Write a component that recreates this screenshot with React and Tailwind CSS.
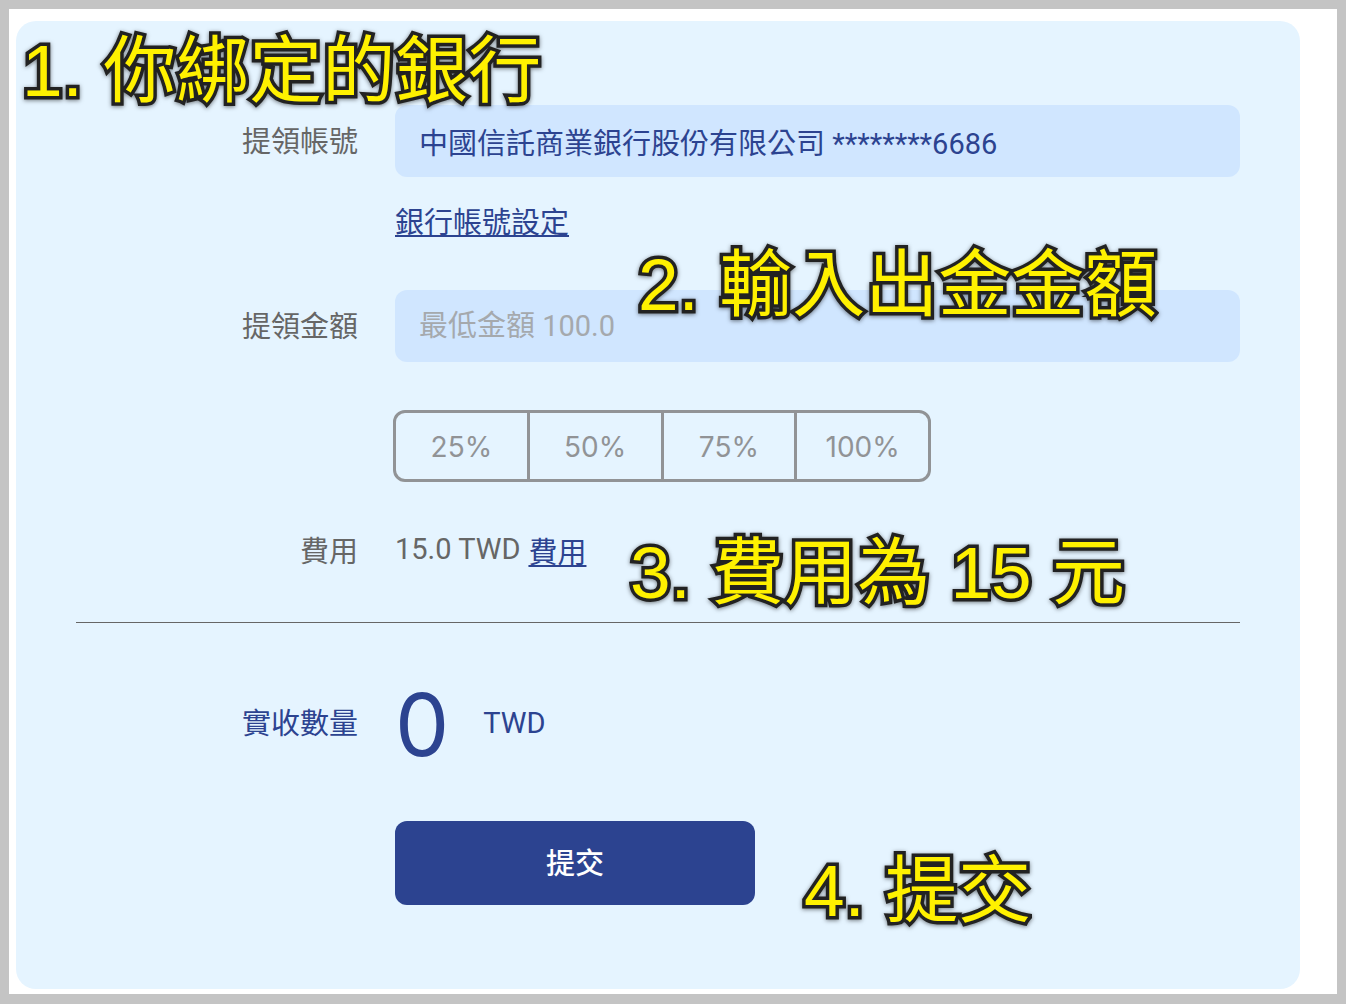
const percents = ["25%", "50%", "75%", "100%"];

function Note({ className, children }) {
  return (
    <div className={`pointer-events-none absolute whitespace-nowrap ${className}`}>
      <span className="font-['Liberation_Sans','Noto_Sans_CJK_TC',sans-serif] text-[73px] leading-[84px] text-[#fff100] [-webkit-text-stroke:7px_#222] [paint-order:stroke_fill] drop-shadow-[0_1px_2px_rgba(0,0,0,0.5)]">
        {children}
      </span>
    </div>
  );
}

function Row({ label, htmlFor, labelClass = "text-[#666]", className = "", children }) {
  return (
    <div className={`flex items-center ${className}`}>
      <label htmlFor={htmlFor} className={`w-[282px] shrink-0 pt-0.5 text-right ${labelClass}`}>
        {label}
      </label>
      <div className="ml-[37px] min-w-0 flex-1">{children}</div>
    </div>
  );
}

export default function App() {
  return (
    <main className="min-h-screen border-[9px] border-b-[10px] border-[#c4c4c4] bg-white pt-3 pr-[37px] pb-[5px] pl-[7px] font-['Roboto','Noto_Sans_CJK_TC',sans-serif] text-[29px] leading-[42px]">
      <form className="relative rounded-[20px] bg-[#e5f4ff] px-[60px] pt-[84px] pb-[84px]" onSubmit={(e) => e.preventDefault()}>
        <Row label="提領帳號" htmlFor="account">
          <input
            id="account"
            readOnly
            defaultValue="中國信託商業銀行股份有限公司 ********6686"
            className="block h-[72px] w-full rounded-xl bg-[#d0e6ff] px-6 text-[#2c4390] outline-none"
          />
        </Row>
        <div className="mt-[25px] ml-[319px]">
          <a href="#bank" className="text-[#2c4390] underline">銀行帳號設定</a>
        </div>

        <Row label="提領金額" htmlFor="amount" className="mt-[46px]">
          <input
            id="amount"
            placeholder="最低金額 100.0"
            className="block h-[72px] w-full rounded-xl bg-[#d0e6ff] px-6 text-[#2c4390] outline-none placeholder:text-[#a5a9ad]"
          />
        </Row>
        <div className="mt-12 ml-[317px] flex h-[72px] w-[538px] divide-x-3 divide-[#919396] rounded-xl border-3 border-[#919396] font-['Inter',sans-serif] text-[28px] text-[#919396]">
          {percents.map((p) => (
            <button key={p} type="button" className="flex-1 pt-0.5">{p}</button>
          ))}
        </div>

        <Row label="費用" className="mt-[49px] h-10" htmlFor="fee">
          <div className="flex items-start gap-2">
            <output id="fee" className="text-[#666]">15.0 TWD</output>
            <a href="#fee-table" className="pt-1 text-[#2c4390] underline">費用</a>
          </div>
        </Row>
        <hr className="mt-[51px] border-[#666]" />

        <Row label="實收數量" labelClass="text-[#2c4390]" className="mt-[60px] h-20" htmlFor="received">
          <output id="received" className="flex items-center text-[#2c4390]">
            <span className="pt-1 font-['Inter',sans-serif] text-[86px] leading-[80px]">0</span>
            <span className="ml-[34px]">TWD</span>
          </output>
        </Row>
        <button type="submit" className="mt-[58px] ml-[319px] block h-[84px] w-[360px] rounded-xl bg-[#2c4390] pt-0.5 font-medium text-white">
          提交
        </button>

        <Note className="top-2 left-[6px]">1. 你綁定的銀行</Note>
        <Note className="top-[222px] left-[622px]">2. 輸入出金金額</Note>
        <Note className="top-[510px] left-[614px]">3. 費用為 15 元</Note>
        <Note className="top-[828px] left-[788px]">4. 提交</Note>
      </form>
    </main>
  );
}
